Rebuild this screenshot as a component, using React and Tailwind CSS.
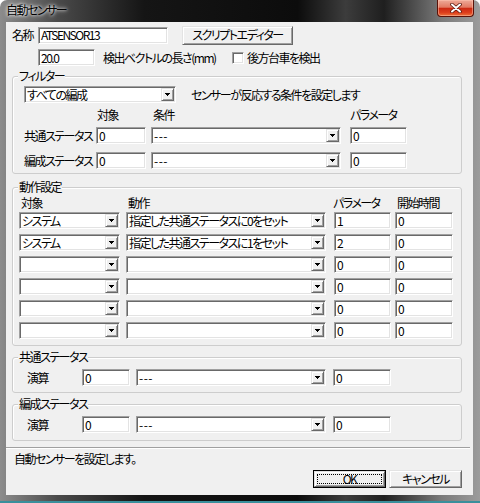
import React from "react";

const sunken =
  "bg-white border border-t-[#a0a0a0] border-l-[#a0a0a0] border-r-white border-b-white shadow-[inset_1px_1px_0_#696969,inset_-1px_-1px_0_#e3e3e3]";
const raised =
  "bg-[#f0f0f0] border border-t-[#e3e3e3] border-l-[#e3e3e3] border-r-[#696969] border-b-[#696969] shadow-[inset_1px_1px_0_#fff,inset_-1px_-1px_0_#a0a0a0]";

function Edit({ w, value = "" }) {
  return (
    <div className={`${w} h-[17px] ${sunken} shrink-0 flex items-center pl-[2px] leading-none whitespace-nowrap`}>
      {value}
    </div>
  );
}

function Arrow() {
  return (
    <div className={`${raised} w-[13px] h-full shrink-0 flex items-center justify-center`}>
      <svg width="5" height="3" viewBox="0 0 5 3" shapeRendering="crispEdges">
        <rect x="0" y="0" width="5" height="1" fill="#000" />
        <rect x="1" y="1" width="3" height="1" fill="#000" />
        <rect x="2" y="2" width="1" height="1" fill="#000" />
      </svg>
    </div>
  );
}

function Combo({ w, value = "" }) {
  const dashes = value === "---";
  return (
    <div className={`${w} h-[17px] ${sunken} shrink-0 flex items-stretch p-[1px]`}>
      <span className={`flex-1 flex items-center pl-[1px] leading-none whitespace-nowrap ${dashes ? "tracking-[0.5px]" : ""}`}>
        {value}
      </span>
      <Arrow />
    </div>
  );
}

function Group({ title, mt, h, children }) {
  return (
    <div className={`${mt} ${h} ml-[6px] w-[450px] shrink-0 border border-[#cdcdcd] rounded-[3px] shadow-[inset_1px_1px_0_#fff]`}>
      <div className="-mt-[8px] ml-[5px] w-fit px-[1px] h-[14px] leading-[14px] bg-[#f0f0f0]">{title}</div>
      {children}
    </div>
  );
}

const actions = [
  { target: "システム", action: "指定した共通ステータスに0をセット", param: "1", start: "0" },
  { target: "システム", action: "指定した共通ステータスに1をセット", param: "2", start: "0" },
  { target: "", action: "", param: "0", start: "0" },
  { target: "", action: "", param: "0", start: "0" },
  { target: "", action: "", param: "0", start: "0" },
  { target: "", action: "", param: "0", start: "0" },
];

export default function App() {
  return (
    <div className="w-[480px] h-[503px] flex flex-col overflow-hidden rounded-t-[7px] border-b-2 border-b-[#3a8f9c] bg-[linear-gradient(90deg,#8c8c8c_0%,#4a4a4a_12%,#151515_30%,#0c0c0c_62%,#3c3c3c_72%,#1f1f1f_80%,#7a7a7a_92%,#9c9c9c_100%)] font-['Noto_Sans_CJK_JP',sans-serif] text-[12px] tracking-[-1.5px] text-black [font-feature-settings:'palt']">
      {/* title bar */}
      <div className="h-[22px] shrink-0 flex items-start">
        <span className="ml-[6px] mt-[3px] leading-[14px] [text-shadow:0_0_5px_#fff,0_0_3px_#fff]">自動センサー</span>
        <div className="ml-auto mr-[6px] w-[37px] h-[17px] flex items-center justify-center rounded-b-[4px] border border-t-0 border-[#5a1208] bg-[linear-gradient(180deg,#eeaa98_0%,#e27a62_45%,#cc2a12_52%,#dc3d1c_78%,#ec7038_100%)] shadow-[inset_0_0_0_1px_rgba(255,200,180,0.5)]">
          <svg width="12" height="10" viewBox="0 0 12 10">
            <path d="M2 1.5l8 7M10 1.5l-8 7" stroke="#5a1a10" strokeWidth="3.6" strokeLinecap="round" />
            <path d="M2 1.5l8 7M10 1.5l-8 7" stroke="#fff" strokeWidth="2" strokeLinecap="round" />
          </svg>
        </div>
      </div>

      {/* client area */}
      <div className="ml-[6px] mr-[7px] h-[473px] shrink-0 bg-[#f0f0f0] flex flex-col">
        {/* name row */}
        <div className="mt-[4px] h-[18px] flex items-center shrink-0">
          <span className="ml-[6px] w-[26px] leading-none">名称</span>
          <Edit w="w-[130px]" value="ATSENSOR13" />
          <div className={`${raised} ml-[14px] w-[111px] h-[19px] flex items-center justify-center leading-none`}>
            スクリプトエディター
          </div>
        </div>

        {/* length row */}
        <div className="mt-[5px] h-[17px] flex items-center shrink-0">
          <div className="ml-[32px]">
            <Edit w="w-[57px]" value="20.0" />
          </div>
          <span className="ml-[8px] w-[129px] leading-none whitespace-nowrap">検出ベクトルの長さ(mm)</span>
          <div className={`${sunken} w-[12px] h-[12px] shrink-0`} />
          <span className="ml-[3px] leading-none">後方台車を検出</span>
        </div>

        {/* filter */}
        <Group title="フィルター" mt="mt-[10px]" h="h-[98px]">
          <div className="mt-[3px] flex items-center">
            <div className="ml-[11px]">
              <Combo w="w-[152px]" value="すべての編成" />
            </div>
            <span className="ml-[15px] leading-none">センサーが反応する条件を設定します</span>
          </div>
          <div className="mt-[5px] h-[14px] flex leading-[14px]">
            <span className="ml-[83px] w-[55px] pl-[1px]">対象</span>
            <span className="w-[199px] pl-[2px]">条件</span>
            <span>パラメータ</span>
          </div>
          {["共通ステータス", "編成ステータス"].map((label, i) => (
            <div key={label} className={`${i === 0 ? "mt-[5px]" : "mt-[8px]"} h-[17px] flex items-center`}>
              <span className="ml-[11px] w-[72px] leading-none whitespace-nowrap">{label}</span>
              <Edit w="w-[50px]" value="0" />
              <div className="ml-[5px]">
                <Combo w="w-[190px]" value="---" />
              </div>
              <div className="ml-[9px]">
                <Edit w="w-[57px]" value="0" />
              </div>
            </div>
          ))}
        </Group>

        {/* actions */}
        <Group title="動作設定" mt="mt-[13px]" h="h-[159px]">
          <div className="mt-[2px] h-[14px] flex leading-[14px]">
            <span className="ml-[8px] w-[107px]">対象</span>
            <span className="w-[205px]">動作</span>
            <span className="w-[64px]">パラメータ</span>
            <span>開始時間</span>
          </div>
          <div className="mt-[2px] flex flex-col gap-[5px]">
            {actions.map((a, i) => (
              <div key={i} className="h-[17px] flex items-center">
                <div className="ml-[6px]">
                  <Combo w="w-[101px]" value={a.target} />
                </div>
                <div className="ml-[6px]">
                  <Combo w="w-[200px]" value={a.action} />
                </div>
                <div className="ml-[8px]">
                  <Edit w="w-[57px]" value={a.param} />
                </div>
                <div className="ml-[4px]">
                  <Edit w="w-[58px]" value={a.start} />
                </div>
              </div>
            ))}
          </div>
        </Group>

        {/* status groups */}
        {[
          { title: "共通ステータス", mt: "mt-[11px]", h: "h-[36px]" },
          { title: "編成ステータス", mt: "mt-[11px]", h: "h-[37px]" },
        ].map((g) => (
          <Group key={g.title} title={g.title} mt={g.mt} h={g.h}>
            <div className="mt-[5px] h-[17px] flex items-center">
              <span className="ml-[14px] w-[55px] leading-none">演算</span>
              <Edit w="w-[48px]" value="0" />
              <div className="ml-[6px]">
                <Combo w="w-[190px]" value="---" />
              </div>
              <div className="ml-[7px]">
                <Edit w="w-[58px]" value="0" />
              </div>
            </div>
          </Group>
        ))}

        {/* separator */}
        <div className="mt-[6px] mr-[3px] h-[2px] shrink-0 border-t border-t-[#a0a0a0] border-b border-b-white" />

        {/* status text */}
        <div className="mt-[3px] h-[14px] leading-[14px] ml-[8px] shrink-0">自動センサーを設定します。</div>

        {/* buttons */}
        <div className="mt-[4px] h-[18px] flex justify-end gap-[3px] mr-[11px] shrink-0">
          <div className="w-[73px] h-[18px] border border-black">
            <div className={`${raised} w-full h-full flex items-center justify-center p-[2px]`}>
              <div className="w-full h-full flex items-center justify-center border border-dotted border-black leading-none">OK</div>
            </div>
          </div>
          <div className={`${raised} w-[73px] h-[18px] flex items-center justify-center leading-none`}>キャンセル</div>
        </div>
      </div>
    </div>
  );
}
